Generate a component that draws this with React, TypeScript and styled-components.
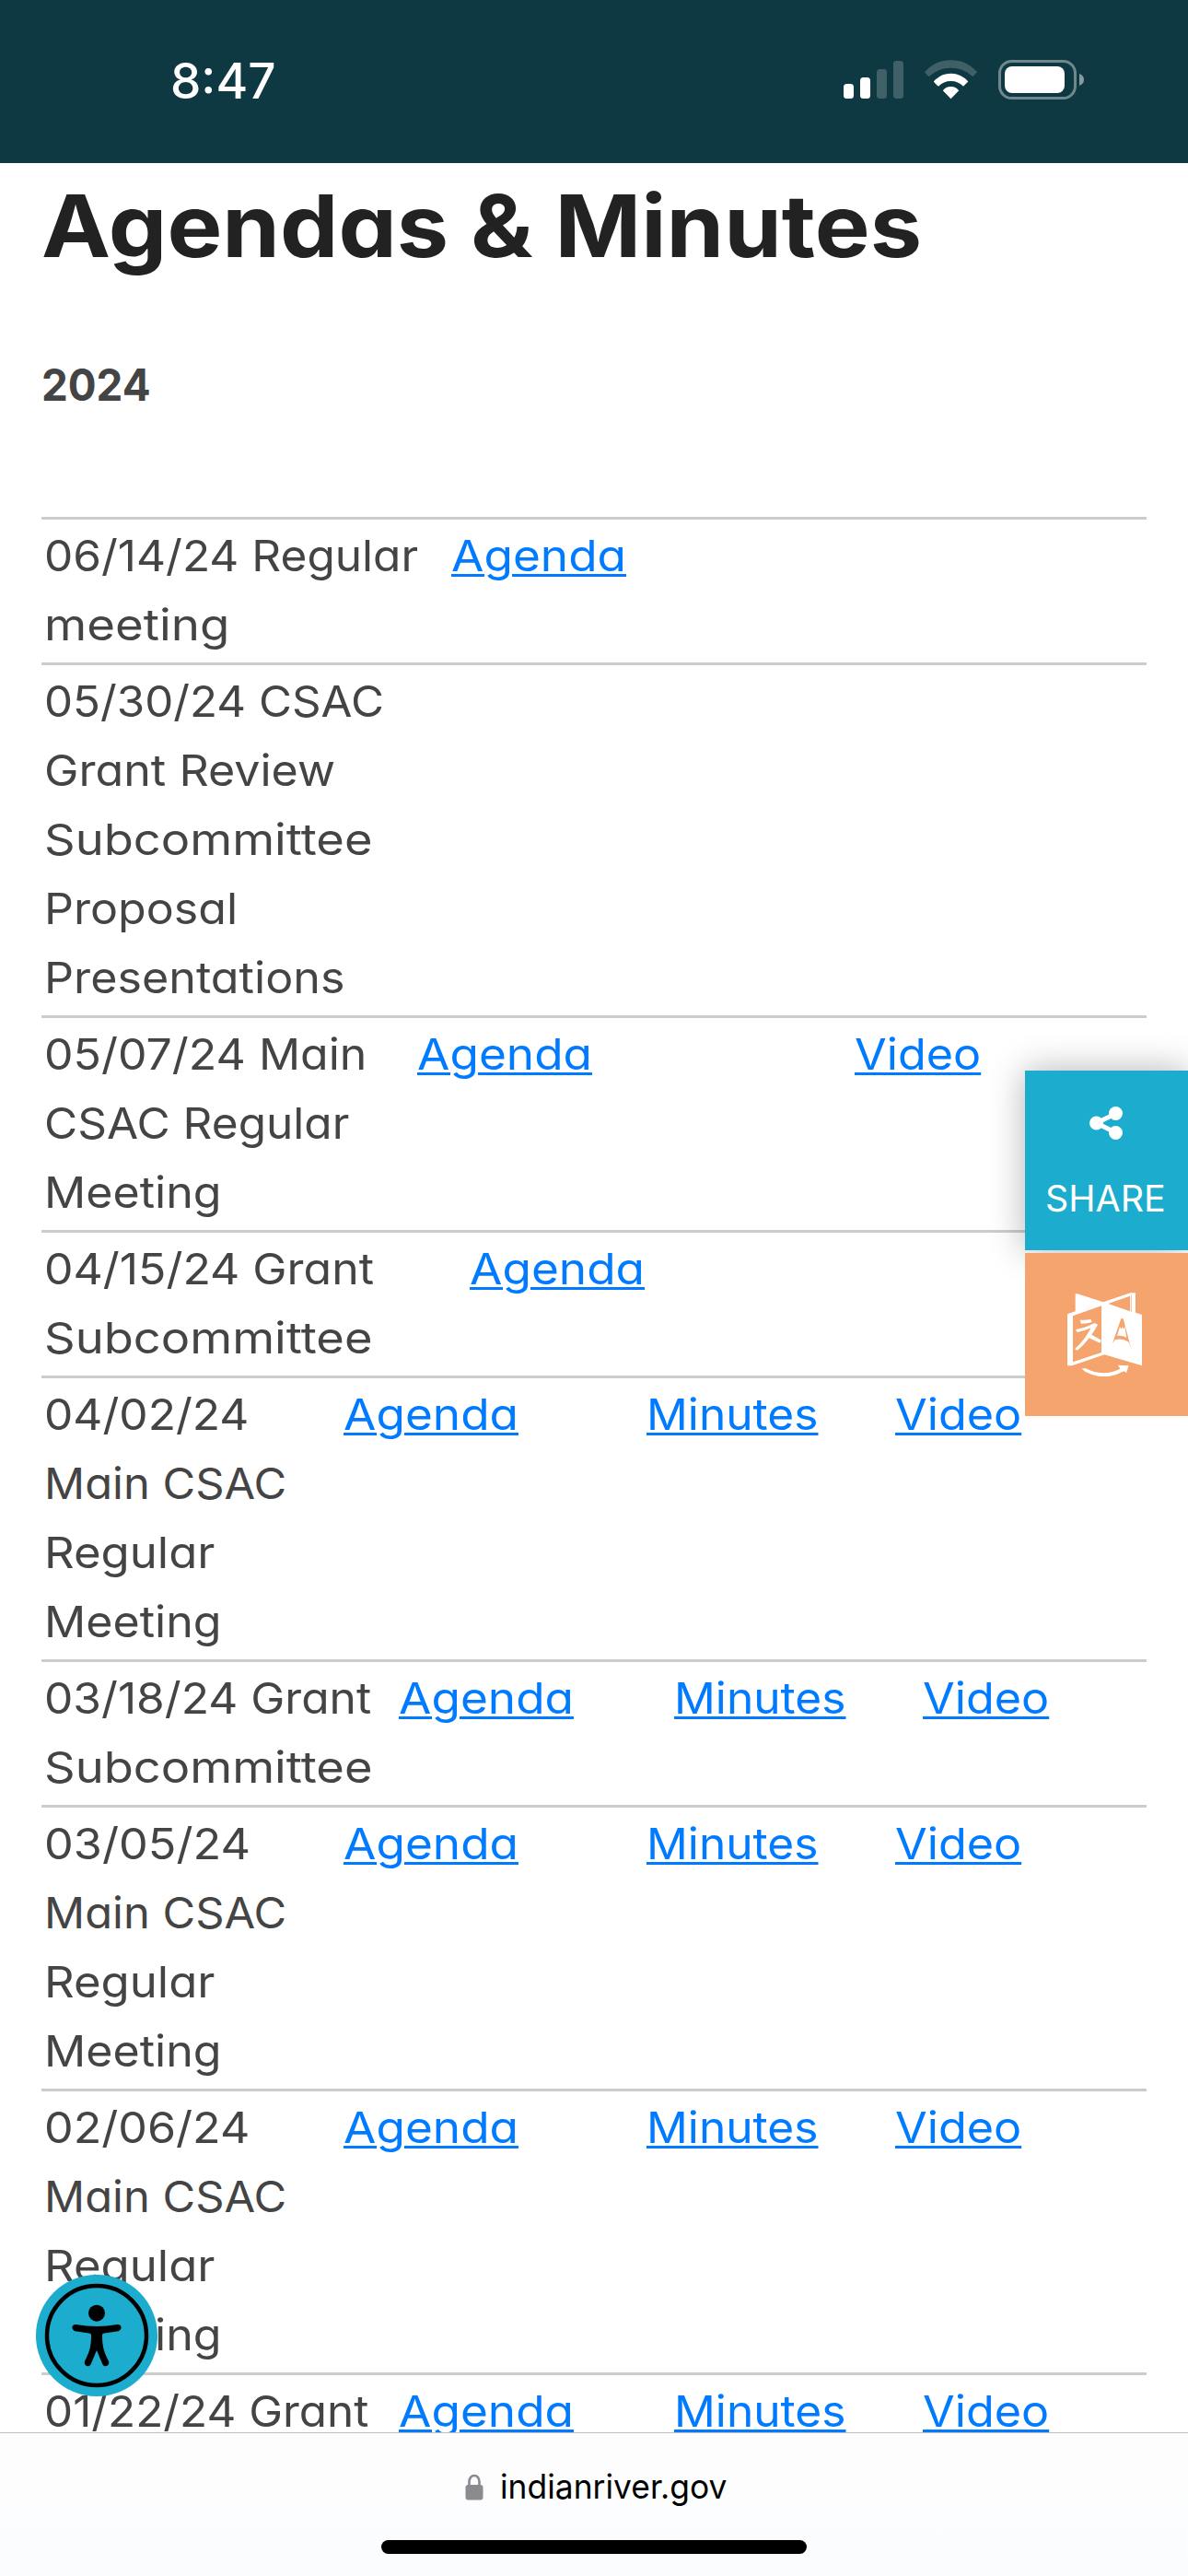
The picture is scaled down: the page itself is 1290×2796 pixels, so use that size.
import React, { useLayoutEffect, useRef, useState } from "react";
import styled, { createGlobalStyle } from "styled-components";

const GlobalStyle = createGlobalStyle`
  html, body { margin: 0; padding: 0; background: #fff; }
  * { box-sizing: border-box; }
`;

const Page = styled.div`
  position: relative;
  display: flex;
  flex-direction: column;
  width: 1290px;
  height: 2796px;
  overflow: hidden;
  background: #fff;
  color: #444;
  font-family: Inter, "Open Sans", sans-serif;
  font-feature-settings: "cv11", "kern";
`;

/* Stretches a line of text to its set measure. */
const FitBox = styled.span<{ $w: number }>`
  display: block;
  width: ${(p) => p.$w}px;
  white-space: nowrap;
`;
const FitInner = styled.span<{ $link?: boolean }>`
  display: inline-block;
  transform-origin: 0 50%;
  ${(p) =>
    p.$link &&
    `
    color: #007bff;
    text-decoration: underline;
    text-decoration-thickness: 3px;
    text-underline-offset: 3px;
  `}
`;
function Fit({ w, link, children }: { w: number; link?: boolean; children: string }) {
  const ref = useRef<HTMLSpanElement>(null);
  const [k, setK] = useState(1);
  useLayoutEffect(() => {
    if (ref.current) setK(w / ref.current.offsetWidth);
  }, [w, children]);
  return (
    <FitBox $w={w}>
      <FitInner as={link ? "a" : "span"} $link={link} ref={ref} style={{ transform: `scaleX(${k})` }}>
        {children}
      </FitInner>
    </FitBox>
  );
}

const StatusBar = styled.header`
  flex: none;
  display: flex;
  align-items: flex-start;
  justify-content: space-between;
  height: 177px;
  padding: 56px 113px 0 185px;
  background: #0f3942;
  color: #fff;
`;
const Clock = styled.div`
  font-size: 53px;
  line-height: 64px;
  font-weight: 550;
`;
const StatusIcons = styled.svg`
  display: block;
  margin-top: 9px;
`;

const Main = styled.main`
  flex: 1;
  min-height: 0;
  overflow: hidden;
  padding: 18px 45px 0;
`;
const Title = styled.h1`
  margin: 0;
  height: 100px;
  line-height: 100px;
  font-size: 94px;
  font-weight: 700;
  color: #222;
`;
const Year = styled.h2`
  margin: 85px 0 106px;
  height: 75px;
  line-height: 75px;
  font-size: 48px;
  font-weight: 750;
  color: #444;
`;
const Row = styled.section<{ $cols: string }>`
  display: grid;
  grid-auto-flow: column;
  grid-template-columns: ${(p) => p.$cols};
  justify-content: start;
  align-items: start;
  border-top: 3px solid #ccc;
  padding: 1px 3px 4px;
  font-size: 47px;
  line-height: 75px;
`;

type Line = [string, number];
interface Meeting {
  lines: Line[];
  cols: string;
  links: string[];
}
const linkWidth: Record<string, number> = { Agenda: 190, Minutes: 187, Video: 137 };

const mainMeeting = (date: string, w: number): Meeting => ({
  lines: [[date, w], ["Main CSAC", 263], ["Regular", 185], ["Meeting", 193]],
  cols: "325px 329px 270px",
  links: ["Agenda", "Minutes", "Video"],
});

const meetings: Meeting[] = [
  { lines: [["06/14/24 Regular", 406], ["meeting", 201]], cols: "442px", links: ["Agenda"] },
  {
    lines: [
      ["05/30/24 CSAC", 369],
      ["Grant Review", 316],
      ["Subcommittee", 356],
      ["Proposal", 210],
      ["Presentations", 327],
    ],
    cols: "442px",
    links: [],
  },
  {
    lines: [["05/07/24 Main", 350], ["CSAC Regular", 331], ["Meeting", 193]],
    cols: "405px 475px",
    links: ["Agenda", "Video"],
  },
  { lines: [["04/15/24 Grant", 358], ["Subcommittee", 356]], cols: "462px", links: ["Agenda"] },
  mainMeeting("04/02/24", 223),
  {
    lines: [["03/18/24 Grant", 355], ["Subcommittee", 356]],
    cols: "385px 299px 270px",
    links: ["Agenda", "Minutes", "Video"],
  },
  mainMeeting("03/05/24", 224),
  mainMeeting("02/06/24", 223),
  {
    lines: [["01/22/24 Grant", 352]],
    cols: "385px 299px 270px",
    links: ["Agenda", "Minutes", "Video"],
  },
];

const SideDock = styled.aside`
  position: absolute;
  right: 0;
  top: 1162px;
  width: 177px;
  display: flex;
  flex-direction: column;
  gap: 3px;
`;
const ShareButton = styled.div`
  height: 195px;
  padding: 39px 0 0 22px;
  background: #1caccd;
  color: #fff;
  font-size: 40px;
  font-weight: 400;
  line-height: 60px;
  box-shadow: 0 0 36px rgba(0, 0, 0, 0.3);
`;
const ShareIcon = styled.svg`
  display: block;
  margin: 0 0 34px 48px;
`;
const TranslateButton = styled.div`
  position: relative;
  height: 177px;
  padding: 43px 0 0 46px;
  background: #f4a46c;
`;

const AccessButton = styled.div`
  position: absolute;
  left: 39px;
  top: 2469px;
  width: 132px;
  height: 132px;
`;

const BrowserBar = styled.footer`
  flex: none;
  display: flex;
  flex-direction: column;
  align-items: center;
  height: 156px;
  border-top: 1px solid #c0c0c2;
  background: linear-gradient(#fdfdfd, #fbfcfe);
`;
const Address = styled.div`
  display: flex;
  align-items: center;
  gap: 18px;
  margin: 35px 0 0 4px;
  height: 46px;
  font-size: 37px;
  line-height: 46px;
  color: #000;
  font-feature-settings: normal;
`;
const HomeIndicator = styled.div`
  width: 462px;
  height: 15px;
  margin-top: 35px;
  border-radius: 8px;
  background: #000;
`;

export default function App() {
  return (
    <Page>
      <GlobalStyle />
      <StatusBar>
        <Clock>
          <Fit w={115}>8:47</Fit>
        </Clock>
        <StatusIcons width="261" height="43" viewBox="916 65 261 43" fill="#fff">
          <rect x="916" y="91" width="11" height="16" rx="3.5" />
          <rect x="934" y="84" width="11" height="23" rx="3.5" />
          <rect x="952" y="75" width="11" height="32" rx="3.5" opacity=".2" />
          <rect x="970" y="66" width="11" height="41" rx="3.5" opacity=".2" />
          <path opacity=".2" d="M1004 78.3Q1015.500 65.300 1032.500 65.300T1061 78.300L1056.300 83.200Q1046 73.800 1032.500 73.800T1008.800 83.200Q1006 81 1004 78.300Z" />
          <path d="M1013.800 88.500Q1021.500 79.800 1032.500 79.800T1051.300 88.500L1046 93.800Q1040.500 88 1032.500 88T1019 93.800Q1016 91.500 1013.800 88.500Z" />
          <path d="M1023.800 98.300Q1027 94 1032.500 94T1041.200 98.300L1032.500 107.200Z" />
          <rect x="1085.500" y="66.500" width="82" height="40" rx="13" fill="none" stroke="#fff" strokeOpacity=".4" strokeWidth="3" />
          <rect x="1091" y="72" width="65" height="29" rx="8" />
          <path opacity=".5" d="M1172 80Q1177 82 1177 86.500T1172 93Z" />
        </StatusIcons>
      </StatusBar>

      <Main>
        <Title>
          <Fit w={956}>Agendas &amp; Minutes</Fit>
        </Title>
        <Year>
          <Fit w={119}>2024</Fit>
        </Year>
        {meetings.map((m) => (
          <Row key={m.lines[0][0]} $cols={m.cols}>
            <div>
              {m.lines.map(([text, w]) => (
                <Fit key={text} w={w}>
                  {text}
                </Fit>
              ))}
            </div>
            {m.links.map((label) => (
              <Fit key={label} w={linkWidth[label]} link>
                {label}
              </Fit>
            ))}
          </Row>
        ))}
      </Main>

      <BrowserBar>
        <Address>
          <svg width="20" height="29" viewBox="0 0 20 29">
            <path d="M4.500 13V8.500a5.500 6.500 0 0 1 11 0V13" fill="none" stroke="#8a8a8f" strokeWidth="2.600" />
            <rect x=".5" y="12" width="19" height="16.500" rx="3" fill="#8a8a8f" />
          </svg>
          <Fit w={246}>indianriver.gov</Fit>
        </Address>
        <HomeIndicator />
      </BrowserBar>

      <SideDock>
        <ShareButton>
          <ShareIcon width="36" height="36" viewBox="0 0 36 36" fill="#fff">
            <path d="M28 8L7.500 18L28 28" fill="none" stroke="#fff" strokeWidth="5" />
            <circle cx="7.500" cy="18" r="7.500" />
            <circle cx="28.500" cy="7.500" r="7.500" />
            <circle cx="28.500" cy="28.500" r="7.500" />
          </ShareIcon>
          <Fit w={131}>SHARE</Fit>
        </ShareButton>
        <TranslateButton>
          <svg width="82" height="91" viewBox="207 788 246 273" fill="#fff">
            <path d="M233 792H240L324 819L412 789H429V853L450 860V1026L328 990L222 1026H207V858L233 849ZM340 824L411 849V799ZM225 864V1014L318 983V831Z" fillRule="evenodd" />
            <path d="M415 796V851" stroke="#f4a46c" strokeWidth="2" />
            <path d="M248 877Q268 878 284 875L287 884Q270 890 252 889Z" />
            <path d="M234 908Q262 904 296 887L306 892Q298 908 286 925L318 943L313 952L278 936Q262 958 240 976L231 972Q262 945 284 903Q262 914 239 917Z" />
            <path d="M382 873H389L415 972L407 949Q385 934 362 942L354 953Z" fill="#f4a46c" />
            <path d="M378 899L383 907L386 898L390 907L394 899L400 934Q385 927 369 929Z" />
            <path d="M254 1035H267Q322 1064 379 1036L372 1024L407 1026L399 1049L391 1044Q326 1080 262 1044Z" />
          </svg>
        </TranslateButton>
      </SideDock>

      <AccessButton>
        <svg width="132" height="132" viewBox="0 0 132 132">
          <circle cx="66" cy="66" r="66" fill="#1caccd" />
          <circle cx="66" cy="66" r="54" fill="none" stroke="#000" strokeWidth="4.500" />
          <circle cx="66" cy="41.700" r="9" />
          <path d="M43.500 54C51 55 58 56 66 56S81 55 88.500 54C93.500 53.500 94 60 89.500 61.200L74.500 63.500C72.500 63.900 72 64.500 72 66C72 78 74 84 78.800 93.500C81 98 75 101.500 72.500 97.500L66 82L59.500 97.500C57 101.500 51 98 53.200 93.500C58 84 60 78 60 66C60 64.500 59.500 63.900 57.500 63.500L42.500 61.200C38 60 38.500 53.500 43.500 54Z" />
        </svg>
      </AccessButton>
    </Page>
  );
}
